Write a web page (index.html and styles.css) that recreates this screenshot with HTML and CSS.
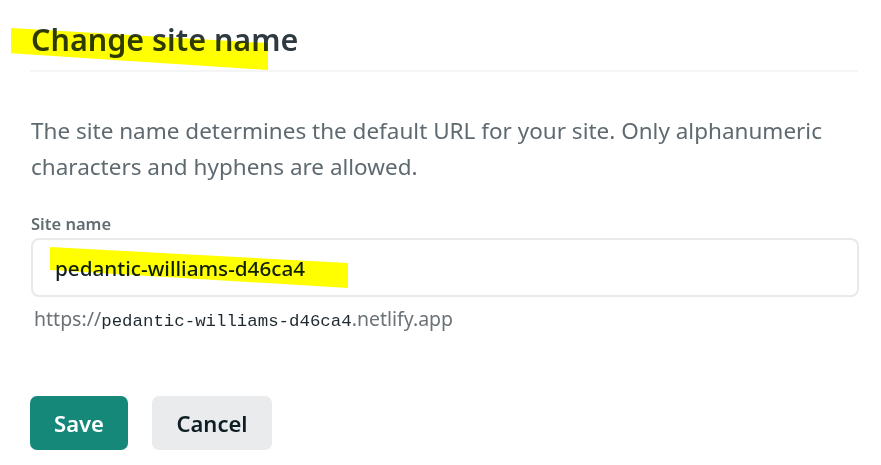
FILE: index.html
```html
<!DOCTYPE html>
<html>
<head>
<meta charset="utf-8">
<link rel="stylesheet" href="styles.css">
</head>
<body>
<div class="page">
  <div class="head">
    <span class="mark mark-title"></span>
    <h1 class="title">Change site name</h1>
  </div>
  <p class="desc">The site name determines the default URL for your site. Only alphanumeric characters and hyphens are allowed.</p>
  <label class="label" for="sn">Site name</label>
  <div class="field">
    <span class="mark mark-input"></span>
    <input id="sn" class="input" type="text" value="pedantic-williams-d46ca4">
  </div>
  <div class="url">https://<code class="mono">pedantic-williams-d46ca4</code>.netlify.app</div>
  <div class="actions">
    <button class="btn btn-save">Save</button>
    <button class="btn btn-cancel">Cancel</button>
  </div>
</div>
</body>
</html>
```
FILE: styles.css
```css
html, body {
  margin: 0;
  padding: 0;
  background: #ffffff;
}
body {
  font-family: "Noto Sans", "Open Sans", sans-serif;
  color: #2e3a40;
}
.page {
  width: 828px;
  padding: 0 0 0 30px;
  position: relative;
}
.head {
  position: relative;
  border-bottom: 2px solid #f4f5f5;
  padding-top: 18px;
  padding-bottom: 10px;
}
.title {
  margin: 0;
  padding-left: 1px;
  font-size: 30.5px;
  line-height: 42px;
  font-weight: 600;
  color: #2e3a40;
  position: relative;
}
.mark {
  position: absolute;
  background: #ffff00;
  mix-blend-mode: multiply;
  z-index: 2;
  pointer-events: none;
}
.mark-title {
  left: -19px;
  top: 28px;
  width: 257px;
  height: 42px;
  clip-path: polygon(0 0, 100% 36%, 100% 100%, 0 60%);
}
.desc {
  margin: 41px 0 0 1px;
  font-size: 22.5px;
  line-height: 36px;
  color: #5e6a70;
  max-width: 820px;
}
.label {
  display: block;
  margin: 29px 0 0 1px;
  font-size: 16.5px;
  font-weight: 600;
  line-height: 20px;
  color: #626c71;
}
.field {
  position: relative;
  margin-top: 4px;
}
.input {
  display: block;
  box-sizing: border-box;
  width: 828px;
  height: 59px;
  margin: 0 0 0 1px;
  border: 2px solid #e8e9ea;
  border-radius: 8px;
  padding: 0 0 0 22px;
  font-family: "Noto Sans", "Open Sans", sans-serif;
  font-size: 20.7px;
  font-weight: 500;
  color: #0e1e25;
  background: #fff;
  outline: none;
}
.mark-input {
  left: 20px;
  top: 9px;
  width: 298px;
  height: 41px;
  clip-path: polygon(0 0, 100% 39%, 100% 100%, 0 56%);
}
.url {
  margin: 9px 0 0 4px;
  font-size: 19.5px;
  line-height: 26px;
  color: #6b7378;
}
.mono {
  font-family: "Liberation Mono", "DejaVu Sans Mono", monospace;
  font-size: 17.4px;
  color: #1f2a30;
}
.actions {
  display: flex;
  gap: 24px;
  margin-top: 61px;
}
.btn {
  height: 54px;
  border: none;
  border-radius: 7px;
  font-family: "Noto Sans", "Open Sans", sans-serif;
  font-size: 22px;
  font-weight: 600;
  padding: 0;
  cursor: pointer;
}
.btn-save {
  width: 98px;
  background: #16887a;
  color: #ffffff;
}
.btn-cancel {
  width: 120px;
  background: #e9ebed;
  color: #0e1e25;
}
```
